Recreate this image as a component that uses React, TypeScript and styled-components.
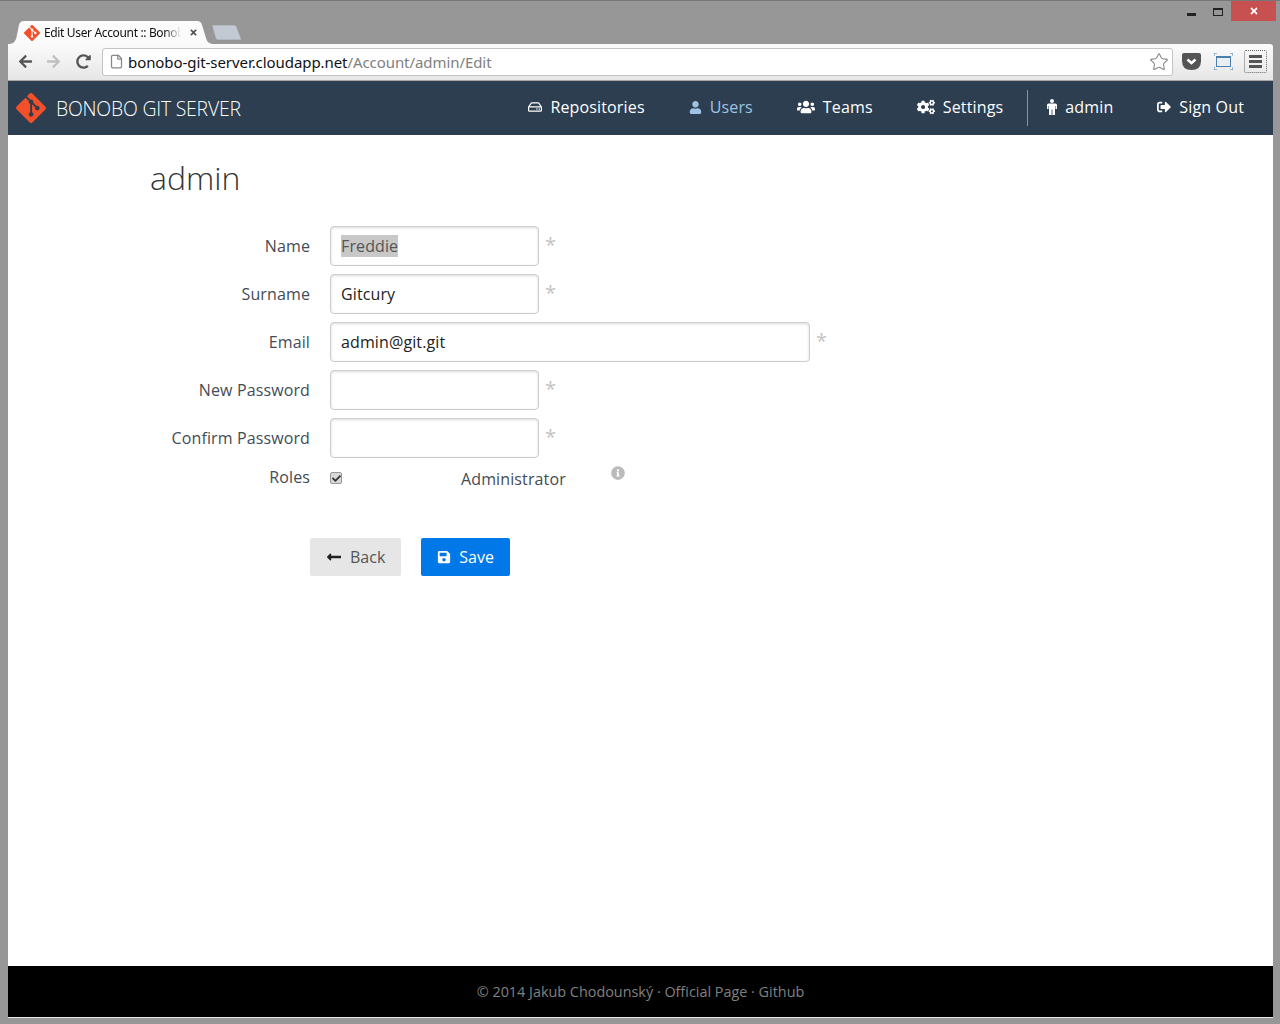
import { useEffect, useRef } from "react";
import styled, { createGlobalStyle } from "styled-components";
import {
  FaArrowLeft,
  FaArrowRight,
  FaCheck,
  FaCogs,
  FaInfoCircle,
  FaLongArrowAltLeft,
  FaRedoAlt,
  FaRegHdd,
  FaSave,
  FaSignOutAlt,
  FaTimes,
  FaUser,
  FaUsers,
} from "react-icons/fa";
import { SiGit } from "react-icons/si";
import { File, Star } from "lucide-react";

const GlobalStyle = createGlobalStyle`
  html, body {
    margin: 0;
    padding: 0;
    background: #979797;
    font-family: "Open Sans", "Noto Sans", sans-serif;
  }
  * {
    box-sizing: border-box;
  }
`;

const Frame = styled.div`
  display: flex;
  flex-direction: column;
  width: 1280px;
  height: 1024px;
  padding: 0 7px 6px 8px;
  overflow: hidden;
  background: #979797;
  border-top: 1px solid #777;
`;

const TitleBar = styled.div`
  display: flex;
  align-items: flex-end;
  flex: none;
  height: 43px;
  padding-left: 2px;
`;

const Tab = styled.div`
  position: relative;
  display: flex;
  align-items: center;
  width: 202px;
  height: 23px;
  padding: 0 0 0 14px;
  font-family: "Noto Sans", sans-serif;
  font-size: 12px;
  letter-spacing: -0.35px;
  color: #111;
`;

const TabShape = styled.svg`
  position: absolute;
  left: 0;
  top: 0;
`;

const TabLogo = styled(SiGit)`
  position: relative;
  flex: none;
  width: 16px;
  height: 16px;
  color: #f34f29;
`;

const TabTitle = styled.span`
  position: relative;
  width: 137px;
  margin-left: 4px;
  overflow: hidden;
  white-space: nowrap;
  -webkit-mask-image: linear-gradient(to right, #000 88%, transparent);
  mask-image: linear-gradient(to right, #000 88%, transparent);
`;

const TabClose = styled(FaTimes)`
  position: relative;
  margin-left: 8px;
  width: 9px;
  height: 9px;
  color: #555;
`;

const NewTab = styled.svg`
  margin: 0 0 3px -1px;
`;

const WindowButtons = styled.div`
  display: flex;
  align-items: flex-start;
  align-self: flex-start;
  margin-left: auto;
  margin-right: -3px;
`;

const MinButton = styled.div`
  width: 9px;
  height: 3px;
  margin: 12px 17px 0 0;
  background: #222;
`;

const MaxButton = styled.div`
  width: 10px;
  height: 8px;
  margin: 7px 8px 0 0;
  border: 1px solid #222;
  border-top-width: 2px;
`;

const CloseButton = styled.div`
  display: flex;
  align-items: center;
  justify-content: center;
  width: 45px;
  height: 20px;
  background: #c75050;
  color: #fff;
  font-size: 10px;
`;

const Toolbar = styled.div`
  display: flex;
  align-items: center;
  flex: none;
  height: 37px;
  padding: 0 6px 1px 10px;
  background: linear-gradient(#fbfbfb, #e6e6e6);
  border-bottom: 1px solid #a8a8a8;
  border-top-right-radius: 3px;
`;

const NavGlyph = styled.span<{ $off?: boolean; $gap: number }>`
  display: flex;
  width: 16px;
  margin-right: ${(p) => p.$gap}px;
  color: ${(p) => (p.$off ? "#c0c0c0" : "#555")};
  font-size: 15px;
`;

const AddressBar = styled.div`
  display: flex;
  align-items: center;
  width: 1071px;
  height: 28px;
  padding: 0 3px 0 6px;
  background: #fff;
  border: 1px solid #c4c4c4;
  border-radius: 3px;
  font-family: "Noto Sans", sans-serif;
  font-size: 15px;
  letter-spacing: -0.07px;
  white-space: nowrap;
`;

const Host = styled.span`
  margin-left: 4px;
  color: #111;
`;

const UrlPath = styled.span`
  color: #808080;
`;

const StarIcon = styled(Star)`
  margin-left: auto;
  color: #888;
`;

const PocketIcon = styled.svg`
  margin-left: 9px;
`;

const FullscreenIcon = styled.svg`
  margin-left: 13px;
`;

const MenuButton = styled.div`
  display: flex;
  flex-direction: column;
  justify-content: center;
  gap: 2px;
  width: 23px;
  height: 23px;
  margin-left: 11px;
  padding: 0 4px;
  border: 1px dotted #666;
  border-radius: 2px;
`;

const MenuBar = styled.span`
  height: 3px;
  background: #555;
`;

const NavBar = styled.nav`
  display: flex;
  align-items: center;
  flex: none;
  height: 54px;
  padding: 0 7px 0 8px;
  background: #2c3e50;
  color: #fff;
`;

const Brand = styled.div`
  display: flex;
  align-items: center;
  gap: 10px;
  margin-right: auto;
  font-size: 19.4px;
  font-weight: 300;
  letter-spacing: -0.2px;
`;

const BrandLogo = styled(SiGit)`
  width: 30px;
  height: 30px;
  color: #f34f29;
`;

const NavItem = styled.a<{ $active?: boolean }>`
  display: flex;
  align-items: center;
  gap: 8px;
  margin: 0 22px;
  padding-bottom: 2px;
  font-size: 16px;
  letter-spacing: 0.15px;
  color: ${(p) => (p.$active ? "#9fc3e4" : "#fff")};
`;

const NavDivider = styled.div`
  width: 1px;
  height: 36px;
  margin: 0 -3px 0 2px;
  background: #8a97a3;
`;

const Main = styled.main`
  flex: 1;
  padding: 0 0 0 142px;
  background: #fff;
`;

const Heading = styled.h1`
  margin: 18px 0 23px;
  font-size: 32px;
  line-height: 50px;
  font-weight: 300;
  color: #333;
`;

const Form = styled.form`
  display: flex;
  flex-direction: column;
  gap: 8px;
`;

const Row = styled.div`
  display: flex;
  align-items: center;
  height: 40px;
`;

const Label = styled.label`
  width: 160px;
  margin-right: 20px;
  font-size: 16px;
  letter-spacing: 0.12px;
  text-align: right;
  color: #444c55;
`;

const Input = styled.input<{ $wide?: boolean }>`
  width: ${(p) => (p.$wide ? 480 : 209)}px;
  height: 40px;
  padding: 0 10px;
  font: inherit;
  font-size: 16px;
  letter-spacing: 0.12px;
  color: #222;
  background: #fff;
  border: 1px solid #ccc;
  border-radius: 4px;
  box-shadow: inset 0 1px 3px #ddd;
  outline: none;
  &::selection {
    background: #c8c8c8;
    color: #555;
  }
`;

const Required = styled.span`
  align-self: flex-start;
  margin: 7px 0 0 6px;
  font-size: 20px;
  line-height: 24px;
  color: #c4c4c4;
`;

const RolesRow = styled.div`
  display: flex;
  align-items: flex-start;
  height: 22px;
`;

const RolesLabel = styled(Label)`
  line-height: 22px;
`;

const CheckBox = styled.span`
  display: flex;
  align-items: center;
  justify-content: center;
  width: 12px;
  height: 12px;
  margin-top: 6px;
  background: #d8d8d8;
  border: 1px solid #999;
  border-radius: 2px;
  color: #333;
  font-size: 9px;
`;

const RoleName = styled.span`
  margin: 2px 0 0 119px;
  font-size: 16px;
  letter-spacing: 0.12px;
  line-height: 22px;
  color: #444c55;
`;

const RoleInfo = styled(FaInfoCircle)`
  margin: 0 0 0 45px;
  font-size: 14px;
  color: #bbb;
`;

const Actions = styled.div`
  display: flex;
  gap: 20px;
  margin: 42px 0 0 160px;
`;

const Button = styled.button<{ $primary?: boolean }>`
  display: flex;
  align-items: center;
  gap: 8px;
  height: 38px;
  padding: 0 16px;
  font: inherit;
  font-size: 16px;
  color: ${(p) => (p.$primary ? "#fff" : "#555")};
  background: ${(p) => (p.$primary ? "#0078e7" : "#e6e6e6")};
  border: none;
  border-radius: 2px;
`;

const BackArrow = styled(FaLongArrowAltLeft)`
  color: #222;
  font-size: 16px;
`;

const SaveIcon = styled(FaSave)`
  font-size: 14px;
`;

const Footer = styled.footer`
  display: flex;
  align-items: center;
  justify-content: center;
  flex: none;
  height: 51px;
  margin-bottom: 1px;
  padding-bottom: 1px;
  background: #000;
  box-shadow: 0 1px 0 #e8e8e8;
  font-size: 14.4px;
  color: #808080;
`;

// fa-male from the reference is wider than the FA5 glyph, so it is drawn here
const PersonIcon = () => (
  <svg width="10" height="16" viewBox="0 0 10 16" fill="currentColor">
    <circle cx="5" cy="2" r="2" />
    <path d="M1.500 4.500 H8.500 Q10 4.500 10 6 V10 H8.500 V7 H8 V16 H5.400 V10.500 H4.600 V16 H2 V7 H1.500 V10 H0 V6 Q0 4.500 1.500 4.500 Z" />
  </svg>
);

const App = () => {
  const nameRef = useRef<HTMLInputElement>(null);

  useEffect(() => {
    nameRef.current?.select();
  }, []);

  return (
    <Frame>
      <GlobalStyle />
      <TitleBar>
        <Tab>
          <TabShape width="202" height="23" viewBox="0 0 202 23">
            <path d="M0 23 C5 22 6 19 7 14 L9 4 C10 1 11 0 14 0 H187 C190 0 191 1 192 4 L196 17 C197 21 199 22 202 23 Z" fill="#fbfbfb" />
          </TabShape>
          <TabLogo />
          <TabTitle>Edit User Account :: Bonobo Git</TabTitle>
          <TabClose />
        </Tab>
        <NewTab width="32" height="16" viewBox="0 0 32 16">
          <path d="M1 1 C1 0.5 1.500 0 2 0 H23 C24 0 25 0.5 25.500 1.500 L30 13 C30.500 14.500 30 15 29 15 H7 C5.500 15 5 14.500 4.500 13 Z" fill="#c3c9d3" stroke="#8d8f94" strokeWidth="0.6" />
        </NewTab>
        <WindowButtons>
          <MinButton />
          <MaxButton />
          <CloseButton>
            <FaTimes />
          </CloseButton>
        </WindowButtons>
      </TitleBar>

      <Toolbar>
        <NavGlyph $gap={12}>
          <FaArrowLeft />
        </NavGlyph>
        <NavGlyph $off $gap={14}>
          <FaArrowRight />
        </NavGlyph>
        <NavGlyph $gap={10}>
          <FaRedoAlt />
        </NavGlyph>
        <AddressBar>
          <File size={15} color="#888" />
          <Host>bonobo-git-server.cloudapp.net</Host>
          <UrlPath>/Account/admin/Edit</UrlPath>
          <StarIcon size={20} strokeWidth={1.3} />
        </AddressBar>
        <PocketIcon width="19" height="17" viewBox="0 0 19 17">
          <path d="M0 2 Q0 0 2 0 H17 Q19 0 19 2 V8 Q19 17 9.500 17 Q0 17 0 8 Z" fill="#555" />
          <path d="M5.500 6.500 L9.500 10 L13.500 6.500" stroke="#fff" strokeWidth="2.600" fill="none" />
        </PocketIcon>
        <FullscreenIcon width="19" height="17" viewBox="0 0 19 17">
          <path d="M0 3 V0 H3 M16 0 H19 V3 M0 14 V17 H3 M16 17 H19 V14" stroke="#4a86b8" fill="none" />
          <rect x="2.500" y="3.500" width="14" height="10" fill="#e8eef4" stroke="#4a7fae" />
          <rect x="3" y="3" width="13" height="2" fill="#4a7fae" />
        </FullscreenIcon>
        <MenuButton>
          <MenuBar />
          <MenuBar />
          <MenuBar />
        </MenuButton>
      </Toolbar>

      <NavBar>
        <Brand>
          <BrandLogo />
          BONOBO GIT SERVER
        </Brand>
        <NavItem>
          <FaRegHdd size={14} />
          Repositories
        </NavItem>
        <NavItem $active>
          <FaUser size={13} />
          Users
        </NavItem>
        <NavItem>
          <FaUsers size={18} />
          Teams
        </NavItem>
        <NavItem>
          <FaCogs size={18} />
          Settings
        </NavItem>
        <NavDivider />
        <NavItem>
          <PersonIcon />
          admin
        </NavItem>
        <NavItem>
          <FaSignOutAlt size={14} />
          Sign Out
        </NavItem>
      </NavBar>

      <Main>
        <Heading>admin</Heading>
        <Form>
          <Row>
            <Label>Name</Label>
            <Input ref={nameRef} defaultValue="Freddie" />
            <Required>*</Required>
          </Row>
          <Row>
            <Label>Surname</Label>
            <Input defaultValue="Gitcury" />
            <Required>*</Required>
          </Row>
          <Row>
            <Label>Email</Label>
            <Input $wide defaultValue="admin@git.git" />
            <Required>*</Required>
          </Row>
          <Row>
            <Label>New Password</Label>
            <Input type="password" />
            <Required>*</Required>
          </Row>
          <Row>
            <Label>Confirm Password</Label>
            <Input type="password" />
            <Required>*</Required>
          </Row>
          <RolesRow>
            <RolesLabel>Roles</RolesLabel>
            <CheckBox>
              <FaCheck />
            </CheckBox>
            <RoleName>Administrator</RoleName>
            <RoleInfo />
          </RolesRow>
          <Actions>
            <Button type="button">
              <BackArrow />
              Back
            </Button>
            <Button type="button" $primary>
              <SaveIcon />
              Save
            </Button>
          </Actions>
        </Form>
      </Main>

      <Footer>© 2014 Jakub Chodounský · Official Page · Github</Footer>
    </Frame>
  );
};

export default App;
